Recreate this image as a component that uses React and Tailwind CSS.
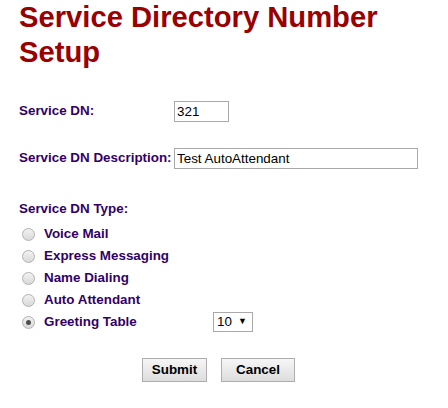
import { useState } from 'react';

const types = ['Voice Mail', 'Express Messaging', 'Name Dialing', 'Auto Attendant', 'Greeting Table'];

function Radio({ checked }) {
  return (
    <span className="w-[13px] h-[13px] rounded-full border border-[#b2b2b2] bg-gradient-to-b from-[#f2f2f2] to-[#d9d9d9] flex items-center justify-center shrink-0">
      {checked && <span className="w-[5px] h-[5px] rounded-full bg-[#4d4d4d]" />}
    </span>
  );
}

export default function App() {
  const [dn, setDn] = useState('321');
  const [desc, setDesc] = useState('Test AutoAttendant');
  const [type, setType] = useState('Greeting Table');

  return (
    <div className="min-h-[408px] bg-white pl-[19px] font-['Liberation_Sans',Arial,sans-serif]">
      <h1 className="text-[29.2px] leading-[35px] font-bold text-[#990000]">Service Directory Number<br />Setup</h1>

      <div className="w-[399px] mt-[31px] text-[13.4px] font-bold text-[#330066]">
        <div className="flex items-center h-[21px]">
          <span className="w-[155px]">Service DN:</span>
          <input value={dn} onChange={e=>setDn(e.target.value)} className="w-[55px] h-[21px] border border-[#a9a9a9] px-[2px] text-[13.4px] font-normal text-black outline-none" />
        </div>
        <div className="flex items-center h-[21px] mt-[26px]">
          <span className="w-[155px]">Service DN Description:</span>
          <input value={desc} onChange={e=>setDesc(e.target.value)} className="w-[244px] h-[21px] border border-[#a9a9a9] px-[2px] text-[13.4px] font-normal text-black outline-none" />
        </div>

        <div className="mt-[32px] leading-[15px]">Service DN Type:</div>
        <div className="mt-[7px]">
          {types.map(t=>(
            <div key={t} onClick={()=>setType(t)} className="flex items-center h-[22px] pl-[3px] cursor-pointer">
              <Radio checked={type===t} />
              <span className="ml-[9px] w-[169px]">{t}</span>
              {t==='Greeting Table' && (
                <div className="w-[40px] h-[20px] border border-[#a9a9a9] bg-white flex items-center justify-between pl-[3px] pr-[5px] text-black font-normal">
                  <span>10</span><span className="text-[9px]">▼</span>
                </div>
              )}
            </div>
          ))}
        </div>

        <div className="flex justify-center gap-[14px] mt-[25px]">
          <button className="w-[65px] h-[24px] border border-[#adadad] bg-gradient-to-b from-[#f6f6f6] to-[#dddddd] text-[13.4px] font-bold text-black">Submit</button>
          <button className="w-[74px] h-[24px] border border-[#adadad] bg-gradient-to-b from-[#f6f6f6] to-[#dddddd] text-[13.4px] font-bold text-black">Cancel</button>
        </div>
      </div>
    </div>
  );
}
